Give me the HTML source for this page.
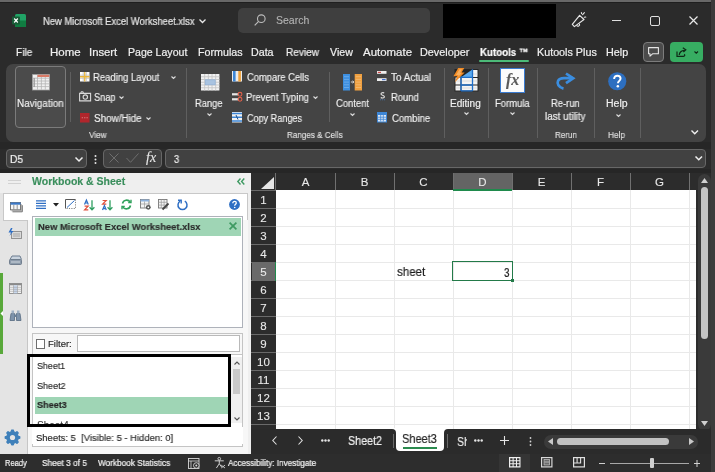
<!DOCTYPE html>
<html><head><meta charset="utf-8">
<style>
*{margin:0;padding:0;box-sizing:border-box}
html,body{width:715px;height:472px;overflow:hidden;background:#2b2b2b;font-family:"Liberation Sans",sans-serif;color:#fff;position:relative}
.a{position:absolute}
.t{position:absolute;white-space:nowrap;line-height:1;transform-origin:0 0;will-change:transform;-webkit-text-stroke:0.1px currentColor}
svg{position:absolute;overflow:visible}

</style></head><body>
<div class="a" style="left:0px;top:0px;width:715px;height:2px;background:#686868;"></div>
<div class="a" style="left:0px;top:2px;width:715px;height:1px;background:#1f1f1f;"></div>
<div class="a" style="left:0px;top:142px;width:711px;height:7px;background:#272727;"></div>
<div class="a" style="left:0px;top:168.5px;width:711px;height:4px;background:#262626;"></div>
<svg style="left:12px;top:14px" width="14" height="13" viewBox="0 0 14 13"><rect x="3" y="0" width="11" height="13" rx="1.5" fill="#21a366"/><rect x="3" y="6.5" width="11" height="6.5" fill="#107c41"/><rect x="0" y="2.5" width="8" height="8" rx="1" fill="#185c37"/><path d="M2.2 4.5L5.8 8.5M5.8 4.5L2.2 8.5" stroke="#fff" stroke-width="1.2"/></svg>
<svg style="left:199px;top:19px" width="7" height="4.5" viewBox="0 0 7 4.5"><path d="M0.5 0.5L3.5 3.5L6.5 0.5" stroke="#e8e8e8" fill="none" stroke-width="1.3"/></svg>
<div class="a" style="left:238px;top:8px;width:192px;height:25px;background:#3f3f3f;border-radius:5px"></div>
<svg style="left:254px;top:14px" width="12" height="12" viewBox="0 0 12 12"><circle cx="7.3" cy="4.7" r="3.8" stroke="#bdbdbd" fill="none" stroke-width="1.1"/><path d="M4.6 7.4L0.7 11.3" stroke="#bdbdbd" stroke-width="1.2"/></svg>
<div class="a" style="left:443px;top:4px;width:113px;height:34px;background:#000;"></div>
<svg style="left:570px;top:11px" width="17" height="17" viewBox="0 0 17 17"><path d="M2.3 13.3L9.6 4.3L14 8.5L4.4 15.6Z" stroke="#e6e6e6" fill="none" stroke-width="1.15" stroke-linejoin="round"/><path d="M6.6 14.3A1.5 1.5 0 0 0 9.4 12.8" stroke="#e6e6e6" fill="none" stroke-width="1.1"/><path d="M12.6 3.6L14.4 1.6M14.3 6.3L15.8 6M11.4 1.6L11.6 2.6" stroke="#e6e6e6" stroke-width="1.1" stroke-linecap="round"/></svg>
<div class="a" style="left:612px;top:20px;width:9px;height:1.2px;background:#e0e0e0;"></div>
<div class="a" style="left:650px;top:16px;width:10px;height:10px;background:none;border:1.2px solid #e0e0e0;border-radius:2px"></div>
<svg style="left:689px;top:16px" width="9" height="9" viewBox="0 0 9 9"><path d="M0.5 0.5L8.5 8.5M8.5 0.5L0.5 8.5" stroke="#e8e8e8" stroke-width="1.2"/></svg>
<div class="a" style="left:479px;top:60px;width:49.5px;height:2px;background:#4cba78;border-radius:1px"></div>
<div class="a" style="left:643px;top:42px;width:21px;height:19.5px;background:#4b4b4b;border:1px solid #7c7c7c;border-radius:4px"></div>
<svg style="left:648px;top:47px" width="11" height="10" viewBox="0 0 11 10"><path d="M0.6 0.6h9.8v6.2H4.5L2 9.2V6.8H0.6Z" stroke="#e6e6e6" fill="none" stroke-width="1.1" stroke-linejoin="round"/></svg>
<div class="a" style="left:670.2px;top:42px;width:32.7px;height:19.5px;background:#37ad62;border-radius:4px"></div>
<svg style="left:676px;top:47px" width="11" height="10" viewBox="0 0 11 10"><path d="M1 4.5V9.3H7.5C8.8 9.3 9.2 8 8.2 7.2" stroke="#0f2a17" fill="none" stroke-width="1.2"/><path d="M3.2 8C3.5 5 5.5 3.6 8.5 3.4M6.8 0.8L9.8 2.8L7.4 5" stroke="#0f2a17" fill="none" stroke-width="1.2"/></svg>
<svg style="left:694px;top:51px" width="4.5" height="3.25" viewBox="0 0 4.5 3.25"><path d="M0.5 0.5L2.25 2.25L4.0 0.5" stroke="#0f2a17" fill="none" stroke-width="1.1"/></svg>
<div class="a" style="left:6px;top:63.5px;width:700px;height:78.5px;background:#444444;border-radius:7px"></div>
<div class="a" style="left:15px;top:66px;width:51px;height:62px;background:#4b4b4b;border:1px solid #7b7b7b;border-radius:4px"></div>
<svg style="left:31.5px;top:73.5px" width="18" height="16.5" viewBox="0 0 18 16.5"><rect x="0" y="0" width="18" height="16.5" fill="#8c8c8c"/><rect x="0.8" y="0.8" width="16.4" height="14.9" fill="#f0f0f0"/><path d="M0.8 4.2h16.4M0.8 7h16.4M0.8 9.8h16.4M0.8 12.6h16.4M5.5 0.8v14.9M9.4 0.8v14.9M13.3 0.8v14.9" stroke="#b5b5b5" stroke-width="0.8"/><rect x="5.5" y="0.8" width="11.7" height="2.2" fill="#d97a66"/><path d="M2.2 4v9" stroke="#9a9a9a" stroke-width="1.3"/></svg>
<div class="a" style="left:70px;top:72px;width:1px;height:50px;background:#5f5f5f;"></div>
<svg style="left:80px;top:71.5px" width="9.5" height="9.5" viewBox="0 0 9.5 9.5"><rect width="9.5" height="9.5" fill="#ffffff"/><path d="M0 3.2h9.5M0 6.3h9.5" stroke="#bdbdbd" stroke-width="0.8"/><path d="M3.2 0v9.5M6.3 0v9.5" stroke="#bdbdbd" stroke-width="0.8"/><path d="M4.75 0v9.5M0 4.75h9.5" stroke="#eab53a" stroke-width="1.3"/></svg>
<svg style="left:171px;top:75.5px" width="5" height="3.5" viewBox="0 0 5 3.5"><path d="M0.5 0.5L2.5 2.5L4.5 0.5" stroke="#dcdcdc" fill="none" stroke-width="1.1"/></svg>
<svg style="left:79px;top:91px" width="12" height="10.5" viewBox="0 0 12 10.5"><path d="M0.6 2.4h11v7.5h-11z" stroke="#d8d8d8" fill="none" stroke-width="1.1"/><path d="M2 2.4V0.8h2.2v1.6" stroke="#d8d8d8" fill="none" stroke-width="1"/><circle cx="6.3" cy="6.1" r="2.2" stroke="#d8d8d8" fill="none" stroke-width="1.1"/></svg>
<svg style="left:118.5px;top:96px" width="5" height="3.5" viewBox="0 0 5 3.5"><path d="M0.5 0.5L2.5 2.5L4.5 0.5" stroke="#dcdcdc" fill="none" stroke-width="1.1"/></svg>
<svg style="left:80px;top:112.5px" width="9.5" height="9.5" viewBox="0 0 10 10"><rect width="10" height="10" fill="#b1262c"/><path d="M1.8 5h1.4M4.3 5h1.4M6.8 5h1.4" stroke="#e08a8a" stroke-width="0.9"/></svg>
<svg style="left:145.5px;top:116.5px" width="5" height="3.5" viewBox="0 0 5 3.5"><path d="M0.5 0.5L2.5 2.5L4.5 0.5" stroke="#dcdcdc" fill="none" stroke-width="1.1"/></svg>
<div class="a" style="left:186px;top:68px;width:1px;height:70px;background:#5f5f5f;"></div>
<svg style="left:200.7px;top:73.6px" width="18.4" height="16.5" viewBox="0 0 18.4 16.5"><rect x="0" y="0" width="18.4" height="16.5" fill="#f2f2f2"/><path d="M0 2.75h18.4M0 5.5h18.4M0 8.25h18.4M0 11h18.4M0 13.75h18.4M3.7 0v16.5M7.35 0v16.5M11.05 0v16.5M14.7 0v16.5" stroke="#c6c6c6" stroke-width="0.9"/><rect x="4.2" y="5.8" width="10" height="5" fill="#a9c3e0" stroke="#8fb0d6" stroke-width="0.7"/></svg>
<svg style="left:206.5px;top:113px" width="5" height="3.5" viewBox="0 0 5 3.5"><path d="M0.5 0.5L2.5 2.5L4.5 0.5" stroke="#dcdcdc" fill="none" stroke-width="1.1"/></svg>
<svg style="left:232px;top:71px" width="10" height="10.5" viewBox="0 0 10 10.5"><rect width="10" height="10.5" fill="#ececec"/><rect x="1" y="0" width="2.6" height="10.5" fill="#3d86d6"/><rect x="6.3" y="0" width="2.6" height="10.5" fill="#f0a23a"/></svg>
<svg style="left:232px;top:92px" width="10" height="10" viewBox="0 0 10 10"><rect x="0" y="1.2" width="6.5" height="2.2" fill="#e6e6e6"/><rect x="0" y="6.2" width="6.5" height="2.2" fill="#e6e6e6"/><circle cx="8" cy="2.3" r="1.9" fill="none" stroke="#e0604a" stroke-width="1.1"/><circle cx="8" cy="7.3" r="1.9" fill="none" stroke="#e0604a" stroke-width="1.1"/></svg>
<svg style="left:312.5px;top:96px" width="5" height="3.5" viewBox="0 0 5 3.5"><path d="M0.5 0.5L2.5 2.5L4.5 0.5" stroke="#dcdcdc" fill="none" stroke-width="1.1"/></svg>
<svg style="left:232px;top:112px" width="10" height="10.5" viewBox="0 0 10 10.5"><rect width="10" height="10.5" fill="#f2f2f2"/><path d="M0 1.5h10M0 5.2h10M0 9h10" stroke="#3d86d6" stroke-width="1.6"/><path d="M4 3L6 7.5" stroke="#1d4f8c" stroke-width="1"/></svg>
<div class="a" style="left:329px;top:72px;width:1px;height:50px;background:#5f5f5f;"></div>
<svg style="left:343px;top:73.5px" width="19" height="16.5" viewBox="0 0 19 16.5"><rect x="0" y="0" width="7" height="16.5" fill="#3d8fe0"/><rect x="11.7" y="0" width="7.3" height="16.5" fill="#f0a040"/><path d="M1 2.7h5M1 5.4h5M1 8.1h5M1 10.8h5M1 13.5h5" stroke="#7ab4ee" stroke-width="0.7"/><path d="M12.7 2.7h5.3M12.7 5.4h5.3M12.7 8.1h5.3M12.7 10.8h5.3M12.7 13.5h5.3" stroke="#f5c27e" stroke-width="0.7"/><path d="M7.8 8h3M9.6 6.8L10.9 8L9.6 9.2" stroke="#e6e6e6" stroke-width="0.9" fill="none"/></svg>
<svg style="left:349.5px;top:113px" width="5" height="3.5" viewBox="0 0 5 3.5"><path d="M0.5 0.5L2.5 2.5L4.5 0.5" stroke="#dcdcdc" fill="none" stroke-width="1.1"/></svg>
<svg style="left:376.7px;top:71.2px" width="9.5" height="10" viewBox="0 0 9.5 10"><rect x="0" y="0" width="9.5" height="2.8" fill="#eeeeee"/><rect x="0" y="7.2" width="9.5" height="2.8" fill="#eeeeee"/><rect x="0.8" y="0.8" width="3.2" height="1.2" fill="#d04848"/><rect x="5" y="8" width="3.6" height="1.2" fill="#3d6fd6"/></svg>
<svg style="left:379.5px;top:92px" width="6" height="8.5" viewBox="0 0 6 8.5"><path d="M4.2 1.1C3.4 0.4 1 0.4 1 1.9C1 3.4 4.4 3.1 4.4 4.7C4.4 6.2 1.7 6.4 0.8 5.5" stroke="#e6e6e6" stroke-width="1.1" fill="none"/><g fill="#4a7fc0"><circle cx="0.6" cy="7.8" r="0.5"/><circle cx="2.6" cy="7.8" r="0.5"/><circle cx="4.6" cy="7.8" r="0.5"/></g></svg>
<svg style="left:377px;top:112px" width="10" height="10.5" viewBox="0 0 10 10.5"><rect width="10" height="10.5" fill="#3d86d6"/><rect x="1" y="3" width="8" height="6.5" fill="#dfe9f6"/><path d="M1 5.2h8M1 7.3h8M3.7 3v6.5M6.3 3v6.5" stroke="#3d86d6" stroke-width="0.8"/></svg>
<div class="a" style="left:444px;top:68px;width:1px;height:70px;background:#5f5f5f;"></div>
<svg style="left:453px;top:68px" width="26" height="24" viewBox="0 0 26 24"><rect x="1.5" y="1" width="24" height="22.5" fill="#262626"/><g fill="#f4f4f4"><rect x="2.5" y="9.5" width="5" height="7"/><rect x="8.5" y="9.5" width="10.5" height="7"/><rect x="20" y="2" width="4.5" height="7"/><rect x="20" y="10" width="4.5" height="6.5"/><rect x="2.5" y="17.5" width="5" height="5"/><rect x="8.5" y="17.5" width="10.5" height="5"/><rect x="20" y="17.5" width="4.5" height="5"/></g><path d="M2.5 13h5M8.5 13h10.5M20 6h4.5M20 13h4.5M20 20h4.5M8.5 20h10.5M2.5 20h5" stroke="#cfcfcf" stroke-width="0.6"/><path d="M8.5 9L19 1.8V9Z" fill="#5aaaf0"/><path d="M8 8V23M19.5 1.2V23M8 9.3H19.5M8 17H19.5M8 22.8H19.5" stroke="#1f6fc8" stroke-width="1.3" fill="none"/><path d="M5.2 0H11.3L8.6 4.6H11.6L1.8 14.3L4.2 8.2H0.4z" fill="#f08a24"/><path d="M6.5 1.2H9L7 4.8H9L4.5 9.5L5.6 7H3z" fill="#f8b060"/></svg>
<svg style="left:463.5px;top:112px" width="5" height="3.5" viewBox="0 0 5 3.5"><path d="M0.5 0.5L2.5 2.5L4.5 0.5" stroke="#dcdcdc" fill="none" stroke-width="1.1"/></svg>
<div class="a" style="left:488px;top:68px;width:1px;height:70px;background:#5f5f5f;"></div>
<div class="a" style="left:499.8px;top:67.7px;width:25.7px;height:25.5px;background:#fbfbfb;border:1.6px solid #3a7bd0"></div>
<div class="t" style="left:506px;top:72px;font-size:16px;font-weight:bold;font-family:'Liberation Serif',serif;font-style:italic;color:#5a5a5a">fx</div>
<svg style="left:509.5px;top:112px" width="5" height="3.5" viewBox="0 0 5 3.5"><path d="M0.5 0.5L2.5 2.5L4.5 0.5" stroke="#dcdcdc" fill="none" stroke-width="1.1"/></svg>
<div class="a" style="left:537px;top:68px;width:1px;height:70px;background:#5f5f5f;"></div>
<svg style="left:555px;top:71px" width="20" height="19" viewBox="0 0 20 19"><path d="M8.5 17.6C3.5 16.5 1.8 12.5 3 10C4 7.8 6 7.2 9 7.2H17.5" stroke="#3b8ee0" stroke-width="2.7" fill="none"/><path d="M11 2.5L18.2 7.3L11 12.2" stroke="#3b8ee0" stroke-width="2.7" fill="none" stroke-linejoin="miter"/></svg>
<div class="a" style="left:594px;top:68px;width:1px;height:70px;background:#5f5f5f;"></div>
<svg style="left:608px;top:72px" width="18.5" height="18.5" viewBox="0 0 19 19"><circle cx="9.5" cy="9.5" r="9.3" fill="#2d6fc0"/><path d="M6.3 7.2C6.3 5 7.8 3.8 9.6 3.8C11.5 3.8 12.9 5 12.9 6.8C12.9 9 10.2 9.2 10.2 11.6" stroke="#fff" stroke-width="2" fill="none"/><circle cx="10.1" cy="14.6" r="1.3" fill="#fff"/></svg>
<svg style="left:615.5px;top:113.5px" width="5" height="3.5" viewBox="0 0 5 3.5"><path d="M0.5 0.5L2.5 2.5L4.5 0.5" stroke="#dcdcdc" fill="none" stroke-width="1.1"/></svg>
<div class="a" style="left:640px;top:68px;width:1px;height:70px;background:#5f5f5f;"></div>
<svg style="left:690.8px;top:130px" width="7.5" height="4.75" viewBox="0 0 7.5 4.75"><path d="M0.5 0.5L3.75 3.75L7.0 0.5" stroke="#f0f0f0" fill="none" stroke-width="1.4"/></svg>
<div class="a" style="left:6px;top:149px;width:81px;height:19px;background:#414141;border:1px solid #676767;border-radius:4px"></div>
<svg style="left:75px;top:156.5px" width="8" height="5.0" viewBox="0 0 8 5.0"><path d="M0.5 0.5L4.0 4.0L7.5 0.5" stroke="#f0f0f0" fill="none" stroke-width="1.5"/></svg>
<svg style="left:94px;top:155px" width="3" height="9" viewBox="0 0 3 9"><circle cx="1.5" cy="1" r="1" fill="#e6e6e6"/><circle cx="1.5" cy="4.5" r="1" fill="#e6e6e6"/><circle cx="1.5" cy="8" r="1" fill="#e6e6e6"/></svg>
<div class="a" style="left:103px;top:149px;width:59px;height:19px;background:#414141;border:1px solid #676767;border-radius:4px"></div>
<svg style="left:108.5px;top:153px" width="10" height="10" viewBox="0 0 10 10"><path d="M0.5 0.5L9.5 9.5M9.5 0.5L0.5 9.5" stroke="#6e6e6e" stroke-width="1"/></svg>
<svg style="left:126px;top:153px" width="13" height="10" viewBox="0 0 13 10"><path d="M0.5 5L4.5 9.3L12.5 0.5" stroke="#6e6e6e" stroke-width="1" fill="none"/></svg>
<div class="t" style="left:146px;top:151px;font-size:14px;font-family:'Liberation Serif',serif;font-style:italic;color:#e8e8e8">fx</div>
<div class="a" style="left:165px;top:149px;width:541px;height:19px;background:#414141;border:1px solid #676767;border-radius:4px"></div>
<svg style="left:695px;top:156px" width="7.5" height="4.75" viewBox="0 0 7.5 4.75"><path d="M0.5 0.5L3.75 3.75L7.0 0.5" stroke="#f0f0f0" fill="none" stroke-width="1.5"/></svg>
<div class="a" style="left:0px;top:172.5px;width:251px;height:281px;background:#efefef;"></div>
<div class="a" style="left:0px;top:192.5px;width:27px;height:261px;background:#e4e4e4;"></div>
<div class="a" style="left:26.5px;top:219.5px;width:1px;height:234px;background:#c6c6c6;"></div>
<div class="a" style="left:8px;top:180.3px;width:13px;height:1px;background:#d2d2d2;"></div>
<div class="a" style="left:8px;top:182.8px;width:13px;height:1px;background:#d2d2d2;"></div>
<div class="a" style="left:3px;top:192.5px;width:244.5px;height:27.5px;background:#ffffff;border:1px solid #c8c8c8;border-right:none;border-bottom:none"></div>
<div class="a" style="left:246.5px;top:192.5px;width:1px;height:261px;background:#c8c8c8;"></div>
<div class="a" style="left:27.5px;top:219.5px;width:220px;height:234px;background:#f7f7f7;"></div>
<div class="a" style="left:3px;top:219.5px;width:24px;height:1px;background:#c8c8c8;"></div>
<div class="a" style="left:31.5px;top:215.5px;width:211.5px;height:112.5px;background:#ffffff;border:1px solid #aeb2ba"></div>
<div class="a" style="left:34.5px;top:218px;width:206px;height:17.5px;background:#9fd5b5;"></div>
<svg style="left:229px;top:222px" width="8" height="8" viewBox="0 0 8 8"><path d="M0.6 0.6L7.4 7.4M7.4 0.6L0.6 7.4" stroke="#3e9a62" stroke-width="1.7"/></svg>
<svg style="left:10px;top:201.5px" width="13" height="10.5" viewBox="0 0 13 10.5"><path d="M2.5 9.8H12.3V3.2" stroke="#6e6e6e" stroke-width="1" fill="none"/><path d="M1.5 8.8H11.3V2.2" stroke="#8a8a8a" stroke-width="0.8" fill="none"/><rect x="0.5" y="0.5" width="10" height="7.3" fill="#f6f6f6" stroke="#6a6a6a" stroke-width="0.9"/><rect x="0.5" y="0.5" width="10" height="2.2" fill="#3a78c8"/><path d="M3.8 2.7V7.8M7.2 2.7V7.8" stroke="#8a8a8a" stroke-width="0.9"/></svg>
<svg style="left:35.5px;top:199.5px" width="10" height="9" viewBox="0 0 10 9"><path d="M0 0.8h10M0 3.3h10M0 5.8h10M0 8.3h10" stroke="#2f6fc4" stroke-width="1.3"/></svg>
<svg style="left:52.5px;top:202.5px" width="6" height="4" viewBox="0 0 6 4"><path d="M0 0H6L3 3.6z" fill="#222"/></svg>
<svg style="left:65px;top:199px" width="11" height="10" viewBox="0 0 11 10"><path d="M0.5 9.5V0.5H10.5" stroke="#555" fill="none" stroke-width="1"/><path d="M10.5 0.5V9.5H0.5" stroke="#777" fill="none" stroke-width="0.9" stroke-dasharray="1.2 1.2"/><path d="M2 8.5L9.5 1.5" stroke="#2f6fc4" stroke-width="1"/></svg>
<svg style="left:83.5px;top:199.7px" width="11" height="10.5" viewBox="0 0 11 10.5"><path d="M0.5 4.4L2.4 0L4.3 4.4M1.1 3H3.7" stroke="#2f6fc4" stroke-width="1.2" fill="none"/><path d="M0.6 6.1H4.2L0.6 9.8H4.3" stroke="#e0503c" stroke-width="1.2" fill="none"/><path d="M8 0.3V9.8M5.6 7.3L8 9.9L10.4 7.3" stroke="#2e9e60" stroke-width="1.3" fill="none"/></svg>
<svg style="left:102px;top:199.7px" width="11" height="10.5" viewBox="0 0 11 10.5"><path d="M0.6 0.5H4.2L0.6 4.2H4.3" stroke="#e0503c" stroke-width="1.2" fill="none"/><path d="M0.5 10.0L2.4 5.6L4.3 10.0M1.1 8.6H3.7" stroke="#2f6fc4" stroke-width="1.2" fill="none"/><path d="M8 0.3V9.8M5.6 7.3L8 9.9L10.4 7.3" stroke="#2e9e60" stroke-width="1.3" fill="none"/></svg>
<svg style="left:121px;top:199px" width="11" height="11" viewBox="0 0 11 11"><path d="M1.5 4.5A4.2 4.2 0 0 1 9.2 3.2M9.5 6.5A4.2 4.2 0 0 1 1.8 7.8" stroke="#2ea05a" stroke-width="1.6" fill="none"/><path d="M7.2 3.6H10V0.8M3.8 7.4H1V10.2" stroke="#2ea05a" stroke-width="1.4" fill="none"/></svg>
<svg style="left:139.5px;top:199px" width="11" height="11" viewBox="0 0 11 11"><rect x="0.5" y="0.5" width="8.5" height="8.5" fill="#f4f4f4" stroke="#777" stroke-width="0.9"/><rect x="0.5" y="0.5" width="8.5" height="2" fill="#8fb3de"/><path d="M0.5 5h8.5M4.5 2.5v6.5" stroke="#999" stroke-width="0.7"/><circle cx="8.3" cy="8.3" r="2.4" fill="#555"/><circle cx="8.3" cy="8.3" r="0.9" fill="#fff"/></svg>
<svg style="left:158px;top:199px" width="11" height="11" viewBox="0 0 11 11"><rect x="0.5" y="0.5" width="8.5" height="8.5" fill="#f4f4f4" stroke="#777" stroke-width="0.9"/><path d="M0.5 3.3h8.5M0.5 6.1h8.5M3.3 0.5v8.5M6.1 0.5v8.5" stroke="#999" stroke-width="0.7"/><path d="M4.5 10.5L10.5 4.5" stroke="#444" stroke-width="1.8"/></svg>
<svg style="left:176.5px;top:199px" width="11" height="11" viewBox="0 0 11 11"><path d="M3.2 2.2A4.5 4.5 0 1 0 7.8 2.2" stroke="#2f6fc4" stroke-width="1.5" fill="none"/><path d="M1 1.2H4.2V4.4" stroke="#2f6fc4" stroke-width="1.4" fill="none"/></svg>
<svg style="left:228.5px;top:199px" width="11" height="11" viewBox="0 0 11 11"><circle cx="5.5" cy="5.5" r="5.4" fill="#2f6fc4"/><path d="M3.8 4.3C3.8 3 4.6 2.4 5.6 2.4C6.6 2.4 7.3 3.1 7.3 4C7.3 5.3 5.7 5.3 5.7 6.7" stroke="#fff" stroke-width="1.3" fill="none"/><circle cx="5.7" cy="8.5" r="0.8" fill="#fff"/></svg>
<svg style="left:237px;top:178px" width="8" height="7" viewBox="0 0 8 7"><path d="M3.5 0.5L0.8 3.5L3.5 6.5M7.3 0.5L4.6 3.5L7.3 6.5" stroke="#3e9a62" stroke-width="1.4" fill="none"/></svg>
<svg style="left:8px;top:228px" width="14" height="11" viewBox="0 0 14 11"><rect x="3.5" y="3.5" width="10" height="7" fill="#d9d9d9" stroke="#8a8a8a" stroke-width="0.9"/><path d="M5 6h7M5 8h7" stroke="#9a9a9a" stroke-width="0.8"/><path d="M3 0L0.5 4.5H3L1.5 8L5.5 3H3.2L4.5 0z" fill="#2f6fc4"/></svg>
<svg style="left:9px;top:255px" width="13" height="10" viewBox="0 0 13 10"><path d="M1 4.5L3 1H11L12.5 4.5" stroke="#6d7d8f" fill="#c9d3de" stroke-width="1"/><rect x="0.5" y="4.5" width="12" height="5" rx="1" fill="#8d9bab" stroke="#5f6f80" stroke-width="0.8"/><path d="M2 7h9" stroke="#e0e6ec" stroke-width="0.8"/></svg>
<svg style="left:9px;top:282.5px" width="13" height="11" viewBox="0 0 13 11"><rect x="0.5" y="0.5" width="12" height="10" fill="#f3f3f3" stroke="#8a8a8a" stroke-width="0.9"/><rect x="0.5" y="0.5" width="12" height="1.8" fill="#8a8a8a"/><rect x="4.5" y="2.3" width="4" height="8" fill="#c8d8ee"/><path d="M0.5 4.3h12M0.5 6.3h12M0.5 8.3h12M4.5 2.3v8M8.5 2.3v8" stroke="#a0a0a0" stroke-width="0.6"/></svg>
<svg style="left:9px;top:309.5px" width="13" height="11" viewBox="0 0 13 11"><path d="M1 10.5L2 3.5H5.5L5.5 10.5ZM7.5 10.5V3.5H11L12 10.5Z" fill="#7e93ab" stroke="#566a80" stroke-width="0.8"/><rect x="2.5" y="0.5" width="2.5" height="3" fill="#9eb0c4"/><rect x="8" y="0.5" width="2.5" height="3" fill="#9eb0c4"/><rect x="5" y="4.5" width="3" height="2.5" fill="#6a7f96"/></svg>
<div class="a" style="left:0px;top:273px;width:3px;height:81px;background:#58a83a;"></div>
<svg style="left:0px;top:311px" width="3" height="5" viewBox="0 0 3 5"><path d="M3 0L0.5 2.5L3 5z" fill="#fff"/></svg>
<div class="a" style="left:31.5px;top:332.5px;width:211px;height:21px;background:#f7f7f7;border:1px solid #c4c4c4;border-bottom:none"></div>
<div class="a" style="left:35.5px;top:339px;width:9.5px;height:9.5px;background:#ffffff;border:1px solid #6e6e6e"></div>
<div class="a" style="left:77px;top:335px;width:163px;height:17px;background:#ffffff;border:1px solid #b9b9b9"></div>
<div class="a" style="left:31.5px;top:353.5px;width:211px;height:93px;background:#ffffff;border:1px solid #c4c4c4"></div>
<div class="a" style="left:34.5px;top:396.7px;width:193px;height:17px;background:#9fd5b5;"></div>
<div class="a" style="left:231px;top:357px;width:11px;height:66px;background:#f0f0f0;"></div>
<div class="a" style="left:233px;top:369px;width:7px;height:25px;background:#c9c9c9;"></div>
<svg style="left:233.5px;top:361px" width="6" height="4" viewBox="0 0 6 4"><path d="M0.5 3.5L3 1L5.5 3.5" stroke="#555" fill="none" stroke-width="1.1"/></svg>
<svg style="left:233.5px;top:416.5px" width="6" height="4" viewBox="0 0 6 4"><path d="M0.5 0.5L3 3L5.5 0.5" stroke="#555" fill="none" stroke-width="1.1"/></svg>
<div class="a" style="left:34px;top:414px;width:190px;height:9.5px;overflow:hidden"><div class="t" style="left:3px;top:7px;font-size:10px;color:#333">Sheet4</div></div>
<div class="a" style="left:27px;top:354px;width:203.5px;height:73px;background:none;border:3.5px solid #000"></div>
<div class="a" style="left:32px;top:427px;width:211px;height:17px;background:#ffffff;"></div>
<svg style="left:4px;top:429px" width="17" height="17" viewBox="0 0 17 17"><g fill="#3f80ba"><circle cx="8.5" cy="8.5" r="6.4"/><rect x="6.9" y="0.6" width="3.2" height="4" rx="0.8" transform="rotate(0 8.5 8.5)"/><rect x="6.9" y="0.6" width="3.2" height="4" rx="0.8" transform="rotate(45 8.5 8.5)"/><rect x="6.9" y="0.6" width="3.2" height="4" rx="0.8" transform="rotate(90 8.5 8.5)"/><rect x="6.9" y="0.6" width="3.2" height="4" rx="0.8" transform="rotate(135 8.5 8.5)"/><rect x="6.9" y="0.6" width="3.2" height="4" rx="0.8" transform="rotate(180 8.5 8.5)"/><rect x="6.9" y="0.6" width="3.2" height="4" rx="0.8" transform="rotate(225 8.5 8.5)"/><rect x="6.9" y="0.6" width="3.2" height="4" rx="0.8" transform="rotate(270 8.5 8.5)"/><rect x="6.9" y="0.6" width="3.2" height="4" rx="0.8" transform="rotate(315 8.5 8.5)"/></g><circle cx="8.5" cy="8.5" r="2.6" fill="#e4e4e4"/></svg>
<div class="a" style="left:251px;top:172.5px;width:460px;height:257px;background:#2c2c2c;"></div>
<div class="a" style="left:276px;top:190px;width:420px;height:239px;background:#ffffff;"></div>
<div class="a" style="left:335px;top:190px;width:1px;height:239px;background:#e9e9e9;"></div>
<div class="a" style="left:335px;top:173px;width:1px;height:17px;background:#707070;"></div>
<div class="a" style="left:394px;top:190px;width:1px;height:239px;background:#e9e9e9;"></div>
<div class="a" style="left:394px;top:173px;width:1px;height:17px;background:#707070;"></div>
<div class="a" style="left:453px;top:190px;width:1px;height:239px;background:#e9e9e9;"></div>
<div class="a" style="left:453px;top:173px;width:1px;height:17px;background:#707070;"></div>
<div class="a" style="left:512px;top:190px;width:1px;height:239px;background:#e9e9e9;"></div>
<div class="a" style="left:512px;top:173px;width:1px;height:17px;background:#707070;"></div>
<div class="a" style="left:571px;top:190px;width:1px;height:239px;background:#e9e9e9;"></div>
<div class="a" style="left:571px;top:173px;width:1px;height:17px;background:#707070;"></div>
<div class="a" style="left:630px;top:190px;width:1px;height:239px;background:#e9e9e9;"></div>
<div class="a" style="left:630px;top:173px;width:1px;height:17px;background:#707070;"></div>
<div class="a" style="left:689px;top:190px;width:1px;height:239px;background:#e9e9e9;"></div>
<div class="a" style="left:689px;top:173px;width:1px;height:17px;background:#707070;"></div>
<div class="a" style="left:276px;top:208px;width:420px;height:1px;background:#e9e9e9;"></div>
<div class="a" style="left:276px;top:226px;width:420px;height:1px;background:#e9e9e9;"></div>
<div class="a" style="left:276px;top:244px;width:420px;height:1px;background:#e9e9e9;"></div>
<div class="a" style="left:276px;top:262px;width:420px;height:1px;background:#e9e9e9;"></div>
<div class="a" style="left:276px;top:280px;width:420px;height:1px;background:#e9e9e9;"></div>
<div class="a" style="left:276px;top:298px;width:420px;height:1px;background:#e9e9e9;"></div>
<div class="a" style="left:276px;top:316px;width:420px;height:1px;background:#e9e9e9;"></div>
<div class="a" style="left:276px;top:334px;width:420px;height:1px;background:#e9e9e9;"></div>
<div class="a" style="left:276px;top:352px;width:420px;height:1px;background:#e9e9e9;"></div>
<div class="a" style="left:276px;top:370px;width:420px;height:1px;background:#e9e9e9;"></div>
<div class="a" style="left:276px;top:388px;width:420px;height:1px;background:#e9e9e9;"></div>
<div class="a" style="left:276px;top:406px;width:420px;height:1px;background:#e9e9e9;"></div>
<div class="a" style="left:276px;top:424px;width:420px;height:1px;background:#e9e9e9;"></div>
<div class="a" style="left:251px;top:190px;width:25px;height:1.2px;background:#6a6a6a;"></div>
<div class="a" style="left:251px;top:208px;width:25px;height:1.2px;background:#6a6a6a;"></div>
<div class="a" style="left:251px;top:226px;width:25px;height:1.2px;background:#6a6a6a;"></div>
<div class="a" style="left:251px;top:244px;width:25px;height:1.2px;background:#6a6a6a;"></div>
<div class="a" style="left:251px;top:262px;width:25px;height:1.2px;background:#6a6a6a;"></div>
<div class="a" style="left:251px;top:280px;width:25px;height:1.2px;background:#6a6a6a;"></div>
<div class="a" style="left:251px;top:298px;width:25px;height:1.2px;background:#6a6a6a;"></div>
<div class="a" style="left:251px;top:316px;width:25px;height:1.2px;background:#6a6a6a;"></div>
<div class="a" style="left:251px;top:334px;width:25px;height:1.2px;background:#6a6a6a;"></div>
<div class="a" style="left:251px;top:352px;width:25px;height:1.2px;background:#6a6a6a;"></div>
<div class="a" style="left:251px;top:370px;width:25px;height:1.2px;background:#6a6a6a;"></div>
<div class="a" style="left:251px;top:388px;width:25px;height:1.2px;background:#6a6a6a;"></div>
<div class="a" style="left:251px;top:406px;width:25px;height:1.2px;background:#6a6a6a;"></div>
<div class="a" style="left:251px;top:424px;width:25px;height:1.2px;background:#6a6a6a;"></div>
<svg style="left:261px;top:176.5px" width="13" height="12" viewBox="0 0 13 12"><path d="M13 0V12H0z" fill="#e6e6e6"/></svg>
<div class="a" style="left:275px;top:173px;width:1px;height:17px;background:#707070;"></div>
<div class="a" style="left:454px;top:173px;width:58px;height:17px;background:#646464;"></div>
<div class="a" style="left:453px;top:189.3px;width:59px;height:1.3px;background:#1f8a4c;"></div>
<div class="a" style="left:252px;top:262.5px;width:23px;height:18px;background:#6a6a6a;"></div>
<div class="a" style="left:275px;top:262px;width:1.4px;height:18.5px;background:#1f8a4c;"></div>
<div class="a" style="left:452.3px;top:261.3px;width:61px;height:20px;background:none;border:1.7px solid #237a49"></div>
<div class="a" style="left:510.6px;top:278.6px;width:3.6px;height:3.6px;background:#237a49;"></div>
<div class="t" style="left:276px;width:59px;text-align:center;top:176.5px;font-size:11.5px;color:#e8e8e8">A</div>
<div class="t" style="left:335px;width:59px;text-align:center;top:176.5px;font-size:11.5px;color:#e8e8e8">B</div>
<div class="t" style="left:394px;width:59px;text-align:center;top:176.5px;font-size:11.5px;color:#e8e8e8">C</div>
<div class="t" style="left:453px;width:59px;text-align:center;top:176.5px;font-size:11.5px;color:#e8e8e8">D</div>
<div class="t" style="left:512px;width:59px;text-align:center;top:176.5px;font-size:11.5px;color:#e8e8e8">E</div>
<div class="t" style="left:571px;width:59px;text-align:center;top:176.5px;font-size:11.5px;color:#e8e8e8">F</div>
<div class="t" style="left:630px;width:59px;text-align:center;top:176.5px;font-size:11.5px;color:#e8e8e8">G</div>
<div class="t" style="left:251px;width:25px;text-align:center;top:194.5px;font-size:11.5px;color:#eaeaea">1</div>
<div class="t" style="left:251px;width:25px;text-align:center;top:212.5px;font-size:11.5px;color:#eaeaea">2</div>
<div class="t" style="left:251px;width:25px;text-align:center;top:230.5px;font-size:11.5px;color:#eaeaea">3</div>
<div class="t" style="left:251px;width:25px;text-align:center;top:248.5px;font-size:11.5px;color:#eaeaea">4</div>
<div class="t" style="left:251px;width:25px;text-align:center;top:266.5px;font-size:11.5px;color:#eaeaea">5</div>
<div class="t" style="left:251px;width:25px;text-align:center;top:284.5px;font-size:11.5px;color:#eaeaea">6</div>
<div class="t" style="left:251px;width:25px;text-align:center;top:302.5px;font-size:11.5px;color:#eaeaea">7</div>
<div class="t" style="left:251px;width:25px;text-align:center;top:320.5px;font-size:11.5px;color:#eaeaea">8</div>
<div class="t" style="left:251px;width:25px;text-align:center;top:338.5px;font-size:11.5px;color:#eaeaea">9</div>
<div class="t" style="left:251px;width:25px;text-align:center;top:356.5px;font-size:11.5px;color:#eaeaea">10</div>
<div class="t" style="left:251px;width:25px;text-align:center;top:374.5px;font-size:11.5px;color:#eaeaea">11</div>
<div class="t" style="left:251px;width:25px;text-align:center;top:392.5px;font-size:11.5px;color:#eaeaea">12</div>
<div class="t" style="left:251px;width:25px;text-align:center;top:410.5px;font-size:11.5px;color:#eaeaea">13</div>
<div class="a" style="left:252px;top:424.5px;width:24px;height:4.5px;background:#2c2c2c;"></div>
<div class="a" style="left:697.5px;top:174px;width:13.5px;height:256.5px;background:#3a3a3a;border-radius:7px"></div>
<svg style="left:701px;top:177.5px" width="7" height="5" viewBox="0 0 7 5"><path d="M3.5 0L7 5H0z" fill="#d0d0d0"/></svg>
<div class="a" style="left:701px;top:186.5px;width:7px;height:152px;background:#c4c4c4;border-radius:3.5px"></div>
<svg style="left:701px;top:421px" width="7" height="5" viewBox="0 0 7 5"><path d="M0 0H7L3.5 5z" fill="#d0d0d0"/></svg>
<div class="a" style="left:389px;top:428px;width:12px;height:5px;background:#ffffff;"></div>
<div class="a" style="left:438px;top:428px;width:12px;height:5px;background:#ffffff;"></div>
<div class="a" style="left:251px;top:428.6px;width:144.5px;height:25px;background:#2b2b2b;border-top-right-radius:4px"></div>
<div class="a" style="left:443.5px;top:428.6px;width:267.5px;height:25px;background:#2b2b2b;border-top-left-radius:4px"></div>
<svg style="left:272px;top:436px" width="5" height="9" viewBox="0 0 5 9"><path d="M4.5 0.5L0.8 4.5L4.5 8.5" stroke="#e0e0e0" stroke-width="1.1" fill="none"/></svg>
<svg style="left:298px;top:436px" width="5" height="9" viewBox="0 0 5 9"><path d="M0.5 0.5L4.2 4.5L0.5 8.5" stroke="#e0e0e0" stroke-width="1.1" fill="none"/></svg>
<svg style="left:320.5px;top:439px" width="9" height="3" viewBox="0 0 9 3"><circle cx="1.3" cy="1.5" r="1.2" fill="#e6e6e6"/><circle cx="4.5" cy="1.5" r="1.2" fill="#e6e6e6"/><circle cx="7.7" cy="1.5" r="1.2" fill="#e6e6e6"/></svg>
<div class="a" style="left:392.5px;top:434px;width:1px;height:14px;background:#6a6a6a;"></div>
<div class="a" style="left:395.5px;top:427px;width:48px;height:23.8px;background:#ffffff;border-radius:0 0 4px 4px"></div>
<div class="a" style="left:402.5px;top:447px;width:34.5px;height:1.6px;background:#2a8a4e;"></div>
<div class="a" style="left:447px;top:434px;width:1px;height:14px;background:#6a6a6a;"></div>
<div class="a" style="left:450px;top:430px;width:16.5px;height:20px;overflow:hidden"><div class="t" style="left:7px;top:5.5px;font-size:12px;color:#f0f0f0;transform:scaleX(0.88)">Sheet4</div></div>
<svg style="left:474px;top:439px" width="9" height="3" viewBox="0 0 9 3"><circle cx="1.3" cy="1.5" r="1.2" fill="#e6e6e6"/><circle cx="4.5" cy="1.5" r="1.2" fill="#e6e6e6"/><circle cx="7.7" cy="1.5" r="1.2" fill="#e6e6e6"/></svg>
<svg style="left:500px;top:436px" width="9" height="9" viewBox="0 0 9 9"><path d="M4.5 0v9M0 4.5h9" stroke="#e6e6e6" stroke-width="1.1"/></svg>
<svg style="left:529px;top:436.5px" width="3" height="9" viewBox="0 0 3 9"><circle cx="1.5" cy="1" r="0.9" fill="#d0d0d0"/><circle cx="1.5" cy="4.5" r="0.9" fill="#d0d0d0"/><circle cx="1.5" cy="8" r="0.9" fill="#d0d0d0"/></svg>
<div class="a" style="left:544px;top:434.5px;width:153.5px;height:14px;background:#3a3a3a;border-radius:7px"></div>
<svg style="left:547.5px;top:438px" width="5" height="7" viewBox="0 0 5 7"><path d="M5 0V7L0 3.5z" fill="#c8c8c8"/></svg>
<div class="a" style="left:557px;top:437.5px;width:111.5px;height:7.5px;background:#c2c2c2;border-radius:3.75px"></div>
<svg style="left:689px;top:438px" width="5" height="7" viewBox="0 0 5 7"><path d="M0 0V7L5 3.5z" fill="#c8c8c8"/></svg>
<div class="a" style="left:0px;top:453.5px;width:711px;height:18.5px;background:#2d2d2d;"></div>
<svg style="left:187.5px;top:457.5px" width="12.5" height="11" viewBox="0 0 12.5 11"><rect x="0.5" y="0.5" width="10.5" height="10" fill="none" stroke="#d8d8d8" stroke-width="0.9"/><path d="M0.5 3h10.5M3 3v7.5" stroke="#d8d8d8" stroke-width="0.8"/><circle cx="8.3" cy="7.5" r="2.8" fill="#2d2d2d" stroke="#d8d8d8" stroke-width="0.9"/><circle cx="8.3" cy="7.5" r="1" fill="#d8d8d8"/></svg>
<svg style="left:213.5px;top:457px" width="11.5" height="11.5" viewBox="0 0 12 12"><circle cx="5.5" cy="1.8" r="1.4" fill="none" stroke="#d8d8d8" stroke-width="0.9"/><path d="M0.8 4h9.4M5.5 4v3M5.5 7L2.5 11.5M5.5 7L8 10.5" stroke="#d8d8d8" stroke-width="1" fill="none"/><path d="M7.5 8.5L11.5 11.5M11.5 8.5L7.5 11.5" stroke="#d8d8d8" stroke-width="0.9"/></svg>
<div class="a" style="left:498.5px;top:453.5px;width:31.5px;height:18.5px;background:#353535;"></div>
<svg style="left:509px;top:457px" width="11.5" height="10.5" viewBox="0 0 11.5 10.5"><rect x="0" y="0" width="11.5" height="10.5" fill="#f0f0f0"/><path d="M1.2 1.2h2.4v2.1H1.2zM4.6 1.2h2.4v2.1H4.6zM8 1.2h2.4v2.1H8zM1.2 4.2h2.4v2.1H1.2zM4.6 4.2h2.4v2.1H4.6zM8 4.2h2.4v2.1H8zM1.2 7.2h2.4v2.1H1.2zM4.6 7.2h2.4v2.1H4.6zM8 7.2h2.4v2.1H8z" fill="#353535"/></svg>
<svg style="left:541px;top:457px" width="11.5" height="10.5" viewBox="0 0 11.5 10.5"><rect x="0.6" y="0.6" width="10.3" height="9.3" fill="none" stroke="#d8d8d8" stroke-width="1.2"/><rect x="3" y="2.5" width="5.5" height="5.5" fill="#6a6a6a" stroke="#bdbdbd" stroke-width="0.8"/><path d="M3.5 5h4.5" stroke="#d0d0d0" stroke-width="0.7"/></svg>
<svg style="left:572.5px;top:457px" width="12" height="10.5" viewBox="0 0 12 10.5"><rect x="0.6" y="0.6" width="10.8" height="9.3" fill="none" stroke="#e0e0e0" stroke-width="1.2"/><path d="M0.6 6h7V0.6M4.1 0.6V6" stroke="#e0e0e0" stroke-width="1.1" fill="none"/></svg>
<div class="a" style="left:599px;top:462.5px;width:6px;height:1px;background:#cfcfcf;"></div>
<div class="a" style="left:610px;top:462.5px;width:79px;height:1px;background:#a8a8a8;"></div>
<div class="a" style="left:649.5px;top:457.5px;width:4.5px;height:10.5px;background:#cfcfcf;border-radius:1px"></div>
<svg style="left:693.5px;top:458px" width="6" height="9" viewBox="0 0 6 9"><path d="M3 2v7M0 5.5h6" stroke="#d0d0d0" stroke-width="1"/></svg>
<div class="a" style="left:711px;top:0px;width:4px;height:472px;background:#3c3c3c;"></div>
<div class="t" id="title" style="left:43.37px;top:17.00px;font-size:10px;color:#e6e6e6;transform:scaleX(0.941);-webkit-text-stroke:0.2px currentColor;">New Microsoft Excel Worksheet.xlsx</div>
<div class="t" id="search" style="left:276.05px;top:15.25px;font-size:10.5px;color:#b4b4b4;">Search</div>
<div class="t" id="m_file" style="left:15.51px;top:46.99px;font-size:10.5px;color:#f0f0f0;transform:scaleX(0.967);-webkit-text-stroke:0.2px currentColor;">File</div>
<div class="t" id="m_home" style="left:49.95px;top:47.29px;font-size:10.5px;color:#f0f0f0;transform:scaleX(1.095);-webkit-text-stroke:0.2px currentColor;">Home</div>
<div class="t" id="m_insert" style="left:89.27px;top:47.29px;font-size:10.5px;color:#f0f0f0;transform:scaleX(1.076);-webkit-text-stroke:0.2px currentColor;">Insert</div>
<div class="t" id="m_pl" style="left:127.92px;top:47.29px;font-size:10.5px;color:#f0f0f0;transform:scaleX(1.006);-webkit-text-stroke:0.2px currentColor;">Page Layout</div>
<div class="t" id="m_formulas" style="left:197.55px;top:46.99px;font-size:10.5px;color:#f0f0f0;transform:scaleX(1.020);-webkit-text-stroke:0.2px currentColor;">Formulas</div>
<div class="t" id="m_data" style="left:251.46px;top:47.29px;font-size:10.5px;color:#f0f0f0;transform:scaleX(1.016);-webkit-text-stroke:0.2px currentColor;">Data</div>
<div class="t" id="m_review" style="left:285.60px;top:46.99px;font-size:10.5px;color:#f0f0f0;transform:scaleX(0.959);-webkit-text-stroke:0.2px currentColor;">Review</div>
<div class="t" id="m_view" style="left:330.01px;top:46.99px;font-size:10.5px;color:#f0f0f0;transform:scaleX(1.010);-webkit-text-stroke:0.2px currentColor;">View</div>
<div class="t" id="m_auto" style="left:363.03px;top:47.29px;font-size:10.5px;color:#f0f0f0;transform:scaleX(1.091);-webkit-text-stroke:0.2px currentColor;">Automate</div>
<div class="t" id="m_dev" style="left:419.62px;top:46.99px;font-size:10.5px;color:#f0f0f0;transform:scaleX(1.031);-webkit-text-stroke:0.2px currentColor;">Developer</div>
<div class="t" id="m_kut" style="left:479.54px;top:46.99px;font-size:10.5px;font-weight:bold;color:#ffffff;transform:scaleX(0.925);-webkit-text-stroke:0.2px currentColor;">Kutools ™</div>
<div class="t" id="m_kplus" style="left:536.54px;top:46.99px;font-size:10.5px;color:#f0f0f0;transform:scaleX(1.024);-webkit-text-stroke:0.2px currentColor;">Kutools Plus</div>
<div class="t" id="m_help" style="left:605.51px;top:46.99px;font-size:10.5px;color:#f0f0f0;transform:scaleX(1.027);-webkit-text-stroke:0.2px currentColor;">Help</div>
<div class="t" id="r_nav" style="left:16.74px;top:98.75px;font-size:10px;color:#f2f2f2;transform:scaleX(0.987);-webkit-text-stroke:0.15px currentColor;">Navigation</div>
<div class="t" id="r_read" style="left:93.33px;top:73.01px;font-size:10px;color:#f2f2f2;transform:scaleX(0.948);-webkit-text-stroke:0.15px currentColor;">Reading Layout</div>
<div class="t" id="r_snap" style="left:93.60px;top:93.04px;font-size:10px;color:#f2f2f2;transform:scaleX(0.922);-webkit-text-stroke:0.15px currentColor;">Snap</div>
<div class="t" id="r_show" style="left:93.57px;top:113.75px;font-size:10px;color:#f2f2f2;transform:scaleX(0.985);-webkit-text-stroke:0.15px currentColor;">Show/Hide</div>
<div class="t" id="g_view" style="left:88.73px;top:131.33px;font-size:9px;color:#dedede;transform:scaleX(0.911);-webkit-text-stroke:0.2px currentColor;">View</div>
<div class="t" id="r_range" style="left:195.16px;top:98.86px;font-size:10px;color:#f2f2f2;transform:scaleX(0.933);-webkit-text-stroke:0.15px currentColor;">Range</div>
<div class="t" id="r_cmp" style="left:246.97px;top:73.01px;font-size:10px;color:#f2f2f2;transform:scaleX(0.935);-webkit-text-stroke:0.15px currentColor;">Compare Cells</div>
<div class="t" id="r_prev" style="left:246.24px;top:93.29px;font-size:10px;color:#f2f2f2;transform:scaleX(0.944);-webkit-text-stroke:0.15px currentColor;">Prevent Typing</div>
<div class="t" id="r_copy" style="left:246.99px;top:113.50px;font-size:10px;color:#f2f2f2;transform:scaleX(0.909);-webkit-text-stroke:0.15px currentColor;">Copy Ranges</div>
<div class="t" id="g_rc" style="left:286.55px;top:131.33px;font-size:9px;color:#dedede;transform:scaleX(0.898);-webkit-text-stroke:0.2px currentColor;">Ranges &amp; Cells</div>
<div class="t" id="r_content" style="left:335.79px;top:98.86px;font-size:10px;color:#f2f2f2;transform:scaleX(0.945);-webkit-text-stroke:0.15px currentColor;">Content</div>
<div class="t" id="r_toact" style="left:391.28px;top:73.01px;font-size:10px;color:#f2f2f2;transform:scaleX(0.990);-webkit-text-stroke:0.15px currentColor;">To Actual</div>
<div class="t" id="r_round" style="left:390.88px;top:93.29px;font-size:10px;color:#f2f2f2;transform:scaleX(0.942);-webkit-text-stroke:0.15px currentColor;">Round</div>
<div class="t" id="r_combine" style="left:391.60px;top:113.75px;font-size:10px;color:#f2f2f2;transform:scaleX(0.953);-webkit-text-stroke:0.15px currentColor;">Combine</div>
<div class="t" id="r_edit" style="left:450.46px;top:98.65px;font-size:10px;color:#f2f2f2;transform:scaleX(1.006);-webkit-text-stroke:0.15px currentColor;">Editing</div>
<div class="t" id="r_formula" style="left:494.69px;top:98.65px;font-size:10px;color:#f2f2f2;transform:scaleX(0.947);-webkit-text-stroke:0.15px currentColor;">Formula</div>
<div class="t" id="r_rerun" style="left:551.06px;top:98.86px;font-size:10px;color:#f2f2f2;transform:scaleX(0.938);-webkit-text-stroke:0.15px currentColor;">Re-run</div>
<div class="t" id="r_last" style="left:545.23px;top:111.75px;font-size:10px;color:#f2f2f2;transform:scaleX(0.986);-webkit-text-stroke:0.15px currentColor;">last utility</div>
<div class="t" id="g_rerun" style="left:554.91px;top:130.83px;font-size:9px;color:#dedede;transform:scaleX(0.893);-webkit-text-stroke:0.2px currentColor;">Rerun</div>
<div class="t" id="r_help" style="left:606.41px;top:98.75px;font-size:10px;color:#f2f2f2;transform:scaleX(1.052);-webkit-text-stroke:0.15px currentColor;">Help</div>
<div class="t" id="g_help" style="left:608.44px;top:131.33px;font-size:9px;color:#dedede;transform:scaleX(0.919);-webkit-text-stroke:0.2px currentColor;">Help</div>
<div class="t" id="fb_d5" style="left:9.68px;top:154.01px;font-size:10.5px;color:#f0f0f0;transform:scaleX(0.979);-webkit-text-stroke:0.2px currentColor;">D5</div>
<div class="t" id="fb_3" style="left:174.42px;top:153.64px;font-size:10.5px;color:#f0f0f0;transform:scaleX(0.882);-webkit-text-stroke:0.2px currentColor;">3</div>
<div class="t" id="p_title" style="left:32.37px;top:176.25px;font-size:10.5px;font-weight:bold;color:#3a8e5c;-webkit-text-stroke:0.15px currentColor;">Workbook &amp; Sheet</div>
<div class="t" id="p_file" style="left:37.59px;top:222.32px;font-size:9.5px;font-weight:bold;color:#2b2b2b;transform:scaleX(0.987);-webkit-text-stroke:0.15px currentColor;">New Microsoft Excel Worksheet.xlsx</div>
<div class="t" id="p_filter" style="left:47.69px;top:338.70px;font-size:9.5px;color:#262626;-webkit-text-stroke:0.15px currentColor;">Filter:</div>
<div class="t" id="p_s1" style="left:36.97px;top:360.70px;font-size:9.5px;color:#262626;transform:scaleX(0.936);-webkit-text-stroke:0.15px currentColor;">Sheet1</div>
<div class="t" id="p_s2" style="left:36.96px;top:381.32px;font-size:9.5px;color:#262626;transform:scaleX(0.950);-webkit-text-stroke:0.15px currentColor;">Sheet2</div>
<div class="t" id="p_s3" style="left:37.48px;top:400.06px;font-size:9.5px;font-weight:bold;color:#262626;transform:scaleX(0.956);-webkit-text-stroke:0.15px currentColor;">Sheet3</div>
<div class="t" id="p_count" style="left:36.04px;top:432.78px;font-size:9.5px;color:#262626;transform:scaleX(0.993);white-space:pre;-webkit-text-stroke:0.15px currentColor;">Sheets: 5  [Visible: 5 - Hidden: 0]</div>
<div class="t" id="c_sheet" style="left:396.58px;top:266.05px;font-size:12px;color:#1a1a1a;transform:scaleX(0.963);-webkit-text-stroke:0.15px currentColor;">sheet</div>
<div class="t" id="c_3" style="left:503.67px;top:266.80px;font-size:12px;color:#1a1a1a;transform:scaleX(0.820);-webkit-text-stroke:0.15px currentColor;">3</div>
<div class="t" id="t_s2" style="left:347.93px;top:435.15px;font-size:12px;color:#f0f0f0;transform:scaleX(0.896);-webkit-text-stroke:0.2px currentColor;">Sheet2</div>
<div class="t" id="t_s3" style="left:402.37px;top:433.15px;font-size:12px;color:#222222;transform:scaleX(0.918);-webkit-text-stroke:0.15px currentColor;">Sheet3</div>
<div class="t" id="s_ready" style="left:5.48px;top:459.33px;font-size:9px;color:#f2f2f2;transform:scaleX(0.840);-webkit-text-stroke:0.22px currentColor;">Ready</div>
<div class="t" id="s_sheet" style="left:41.85px;top:459.33px;font-size:9px;color:#f2f2f2;transform:scaleX(0.926);-webkit-text-stroke:0.22px currentColor;">Sheet 3 of 5</div>
<div class="t" id="s_stats" style="left:98.48px;top:459.33px;font-size:9px;color:#f2f2f2;transform:scaleX(0.917);-webkit-text-stroke:0.22px currentColor;">Workbook Statistics</div>
<div class="t" id="s_acc" style="left:227.74px;top:459.33px;font-size:9px;color:#f2f2f2;transform:scaleX(0.904);-webkit-text-stroke:0.22px currentColor;">Accessibility: Investigate</div>

</body></html>
